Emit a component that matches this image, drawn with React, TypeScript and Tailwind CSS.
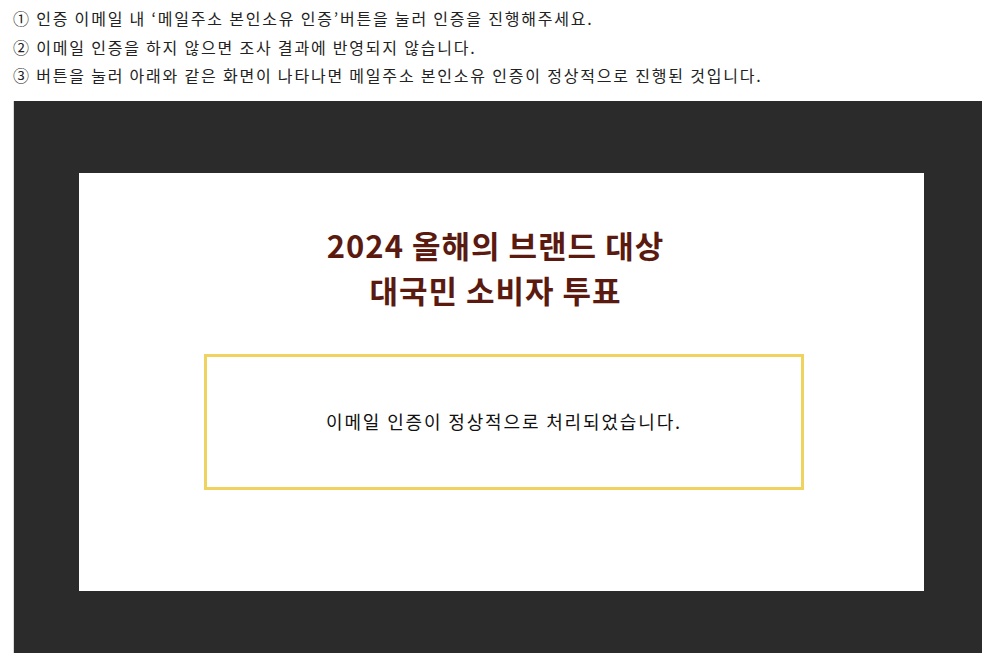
export default function App() {
  const steps = [
    '① 인증 이메일 내 ‘메일주소 본인소유 인증’버튼을 눌러 인증을 진행해주세요.',
    '② 이메일 인증을 하지 않으면 조사 결과에 반영되지 않습니다.',
    '③ 버튼을 눌러 아래와 같은 화면이 나타나면 메일주소 본인소유 인증이 정상적으로 진행된 것입니다.',
  ];

  return (
    <div className="min-h-screen bg-white pl-[13px] pr-[15px] pt-[4px] font-['Noto_Sans_CJK_KR','Noto_Sans',sans-serif] text-[#222]">
      <div className="mb-[11px]">
        {steps.map((s) => (
          <p key={s} className="text-[16px] leading-[28.5px] tracking-[1.8px]">
            {s}
          </p>
        ))}
      </div>

      <div className="border-l border-[#d9d9d9] bg-[#2b2b2b] pb-[62px] pl-[65px] pr-[58px] pt-[72px]">
        <div className="h-[418px] bg-white pt-[49px]">
          <h1 className="pr-[12px] text-center text-[31px] font-bold leading-[45px] tracking-[1px] text-[#5a1a10]">
            2024 올해의 브랜드 대상
            <br />
            대국민 소비자 투표
          </h1>
          <div className="ml-[125px] mt-[42px] flex h-[136px] w-[600px] items-center justify-center border-[3px] border-[#f0d35e]">
            <p className="text-[18px] tracking-[1.85px] text-[#111]">이메일 인증이 정상적으로 처리되었습니다.</p>
          </div>
        </div>
      </div>
    </div>
  );
}
